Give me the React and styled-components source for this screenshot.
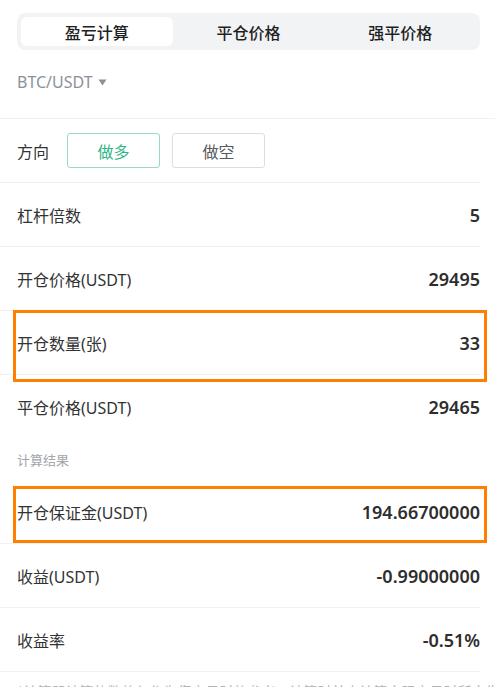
import React from 'react';
import styled, { createGlobalStyle } from 'styled-components';

const GlobalStyle = createGlobalStyle`
  html, body {
    margin: 0;
    padding: 0;
    background: #fff;
  }
  body {
    font-family: "Noto Sans", "Noto Sans CJK SC", sans-serif;
    color: #333;
  }
`;

const Page = styled.div`
  width: 495px;
  height: 687px;
  overflow: hidden;
  padding-top: 13px;
  box-sizing: border-box;
`;

const Tabs = styled.div`
  display: grid;
  grid-template-columns: repeat(3, 1fr);
  margin: 0 15px 0 17px;
  height: 37px;
  padding: 4px;
  box-sizing: border-box;
  background: #f2f3f5;
  border-radius: 8px;
`;

const Tab = styled.div`
  display: flex;
  align-items: center;
  justify-content: center;
  border-radius: 6px;
  font-family: "Noto Sans CJK SC", sans-serif;
  font-size: 16px;
  font-weight: 500;
  color: #1f1f1f;
  background: ${p => (p.$active ? '#fff' : 'transparent')};
`;

const Pair = styled.div`
  display: flex;
  align-items: center;
  gap: 5px;
  height: 69px;
  padding: 0 17px 4px;
  box-sizing: border-box;
  font-size: 16px;
  color: #8c9099;
  border-bottom: 1px solid #f1f1f3;
`;

const Row = styled.div`
  position: relative;
  display: flex;
  align-items: center;
  justify-content: space-between;
  height: 64px;
  margin-right: 15px;
  padding-left: 17px;
  box-sizing: border-box;
  border-bottom: 1px solid ${p => (p.$last ? 'transparent' : '#f1f1f3')};
`;

const Label = styled.span`
  font-family: "Noto Sans", "Noto Sans CJK SC", sans-serif;
  font-size: 16px;
  color: #333;
`;

const Value = styled.span`
  font-family: "Noto Sans", sans-serif;
  font-size: 18px;
  font-weight: 600;
  color: #2e2e2e;
`;

const Side = styled.div`
  display: flex;
  align-items: center;
  gap: 12px;
  margin-left: 18px;
  margin-right: auto;
`;

const SideButton = styled.div`
  display: flex;
  align-items: center;
  justify-content: center;
  width: 93px;
  height: 35px;
  box-sizing: border-box;
  border-radius: 3px;
  font-family: "Noto Sans CJK SC", sans-serif;
  font-size: 16px;
  border: 1px solid ${p => (p.$active ? '#9ad9c2' : '#dedede')};
  color: ${p => (p.$active ? '#2fb586' : '#555a61')};
`;

const Section = styled.div`
  display: flex;
  align-items: center;
  height: 41px;
  padding: 0 17px;
  font-family: "Noto Sans CJK SC", sans-serif;
  font-size: 13px;
  color: #a2a5ab;
`;

const Highlight = styled.div`
  position: absolute;
  left: 13px;
  right: -7px;
  top: ${p => p.$top}px;
  bottom: ${p => p.$bottom}px;
  border: 3px solid #ff8000;
  pointer-events: none;
`;

const Note = styled.div`
  padding: 9px 17px 0;
  font-family: "Noto Sans CJK SC", sans-serif;
  font-size: 14px;
  color: #b0b3b8;
  white-space: nowrap;
  overflow: hidden;
`;

const Caret = () => (
  <svg width="9" height="7" viewBox="0 0 9 7">
    <path d="M0.5 0.5h8L4.5 6.5z" fill="#8c9099" />
  </svg>
);

export default function App() {
  return (
    <Page>
      <GlobalStyle />
      <Tabs>
        <Tab $active>盈亏计算</Tab>
        <Tab>平仓价格</Tab>
        <Tab>强平价格</Tab>
      </Tabs>
      <Pair>
        BTC/USDT <Caret />
      </Pair>
      <Row>
        <Label>方向</Label>
        <Side>
          <SideButton $active>做多</SideButton>
          <SideButton>做空</SideButton>
        </Side>
      </Row>
      <Row>
        <Label>杠杆倍数</Label>
        <Value>5</Value>
      </Row>
      <Row>
        <Label>开仓价格(USDT)</Label>
        <Value>29495</Value>
      </Row>
      <Row>
        <Label>开仓数量(张)</Label>
        <Value>33</Value>
        <Highlight $top={-1} $bottom={-8} />
      </Row>
      <Row $last>
        <Label>平仓价格(USDT)</Label>
        <Value>29465</Value>
      </Row>
      <Section>计算结果</Section>
      <Row>
        <Label>开仓保证金(USDT)</Label>
        <Value>194.66700000</Value>
        <Highlight $top={6} $bottom={0} />
      </Row>
      <Row>
        <Label>收益(USDT)</Label>
        <Value>-0.99000000</Value>
      </Row>
      <Row>
        <Label>收益率</Label>
        <Value>-0.51%</Value>
      </Row>
      <Note>*计算器计算的数值仅作为您交易时的参考，计算时并未计算实际交易时所产生的手续费</Note>
    </Page>
  );
}
